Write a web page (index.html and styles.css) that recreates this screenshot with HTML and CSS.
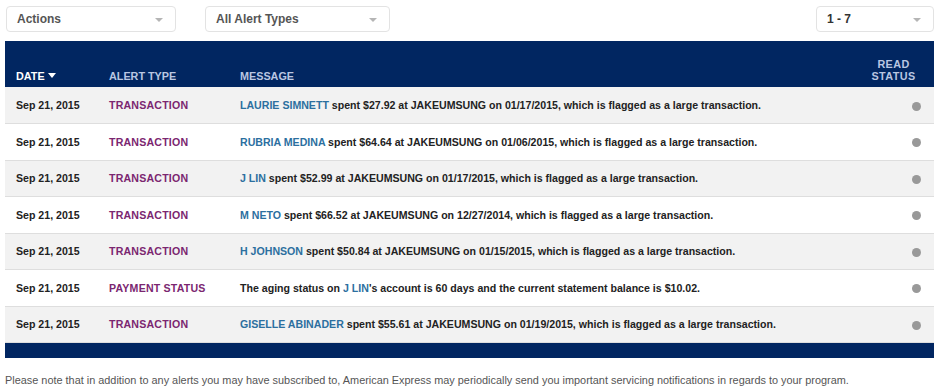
FILE: index.html
```html
<!DOCTYPE html>
<html lang="en">
<head>
  <meta charset="UTF-8">
  <meta name="viewport" content="width=device-width, initial-scale=1.0">
  <title>Alerts</title>
  <link rel="stylesheet" href="styles.css">
</head>
<body>
  <!-- Filters -->
  <div class="toolbar">
    <div class="select select-actions">Actions<span class="caret"></span></div>
    <div class="select select-types">All Alert Types<span class="caret"></span></div>
    <div class="select select-pages">1 - 7<span class="caret"></span></div>
  </div>

  <!-- Alerts Table -->
  <table class="alerts">
    <thead>
      <tr>
        <th class="col-date sorted">DATE<span class="sort-caret"></span></th>
        <th class="col-type">ALERT TYPE</th>
        <th class="col-msg">MESSAGE</th>
        <th class="col-read">READ<br>STATUS</th>
      </tr>
    </thead>
    <tbody>
      <tr>
        <td class="col-date">Sep 21, 2015</td>
        <td class="col-type">TRANSACTION</td>
        <td class="col-msg"><span class="name">LAURIE SIMNETT</span> spent $27.92 at JAKEUMSUNG on 01/17/2015, which is flagged as a large transaction.</td>
        <td class="col-read"><span class="dot"></span></td>
      </tr>
      <tr>
        <td class="col-date">Sep 21, 2015</td>
        <td class="col-type">TRANSACTION</td>
        <td class="col-msg"><span class="name">RUBRIA MEDINA</span> spent $64.64 at JAKEUMSUNG on 01/06/2015, which is flagged as a large transaction.</td>
        <td class="col-read"><span class="dot"></span></td>
      </tr>
      <tr>
        <td class="col-date">Sep 21, 2015</td>
        <td class="col-type">TRANSACTION</td>
        <td class="col-msg"><span class="name">J LIN</span> spent $52.99 at JAKEUMSUNG on 01/17/2015, which is flagged as a large transaction.</td>
        <td class="col-read"><span class="dot"></span></td>
      </tr>
      <tr>
        <td class="col-date">Sep 21, 2015</td>
        <td class="col-type">TRANSACTION</td>
        <td class="col-msg"><span class="name">M NETO</span> spent $66.52 at JAKEUMSUNG on 12/27/2014, which is flagged as a large transaction.</td>
        <td class="col-read"><span class="dot"></span></td>
      </tr>
      <tr>
        <td class="col-date">Sep 21, 2015</td>
        <td class="col-type">TRANSACTION</td>
        <td class="col-msg"><span class="name">H JOHNSON</span> spent $50.84 at JAKEUMSUNG on 01/15/2015, which is flagged as a large transaction.</td>
        <td class="col-read"><span class="dot"></span></td>
      </tr>
      <tr>
        <td class="col-date">Sep 21, 2015</td>
        <td class="col-type">PAYMENT STATUS</td>
        <td class="col-msg">The aging status on <span class="name">J LIN</span>'s account is 60 days and the current statement balance is $10.02.</td>
        <td class="col-read"><span class="dot"></span></td>
      </tr>
      <tr>
        <td class="col-date">Sep 21, 2015</td>
        <td class="col-type">TRANSACTION</td>
        <td class="col-msg"><span class="name">GISELLE ABINADER</span> spent $55.61 at JAKEUMSUNG on 01/19/2015, which is flagged as a large transaction.</td>
        <td class="col-read"><span class="dot"></span></td>
      </tr>
    </tbody>
    <tfoot>
      <tr><td colspan="4"></td></tr>
    </tfoot>
  </table>

  <p class="note">Please note that in addition to any alerts you may have subscribed to, American Express may periodically send you important servicing notifications in regards to your program.</p>
</body>
</html>
```

FILE: styles.css
```css
/* General Reset */
body {
  font-family: "Liberation Sans", Arial, sans-serif;
  margin: 0;
  padding: 0;
  background-color: #ffffff;
  color: #222;
}

/* Filter Toolbar */
.toolbar {
  display: flex;
  padding: 6px 6px 0 6px;
  height: 26px;
}

.select {
  position: relative;
  box-sizing: border-box;
  height: 26px;
  border: 1px solid #e3e3e3;
  border-radius: 4px;
  padding: 0 0 0 10px;
  font-size: 12px;
  font-weight: bold;
  line-height: 24px;
  color: #555;
}

.select-actions {
  width: 170px;
}

.select-types {
  width: 185px;
  margin-left: 29px;
}

.select-pages {
  width: 118px;
  margin-left: auto;
  color: #333;
}

.caret {
  position: absolute;
  right: 12px;
  top: 11px;
  width: 0;
  height: 0;
  border-left: 4px solid transparent;
  border-right: 4px solid transparent;
  border-top: 4px solid #b5b5b5;
}

/* Alerts Table */
.alerts {
  width: 929px;
  margin: 9px 0 0 5px;
  border-collapse: collapse;
  font-size: 10.6px;
  font-weight: bold;
}

.alerts thead tr {
  background-color: #012661;
  height: 46px;
}

.alerts th {
  text-align: left;
  vertical-align: bottom;
  padding: 0 0 5px 0;
  color: #b9c7e2;
  font-size: 10.8px;
  line-height: 12px;
}

.alerts th.sorted {
  color: #ffffff;
}

.sort-caret {
  display: inline-block;
  width: 0;
  height: 0;
  margin-left: 3px;
  vertical-align: 2px;
  border-left: 4px solid transparent;
  border-right: 4px solid transparent;
  border-top: 5px solid #ffffff;
}

.alerts th.col-read {
  text-align: center;
  letter-spacing: 0.4px;
  padding-left: 12px;
}

.col-date {
  width: 93px;
  padding-left: 11px !important;
}

.col-type {
  width: 131px;
}

.col-read {
  width: 80px;
}

.alerts tbody tr {
  height: 36.5px;
  border-bottom: 1px solid #dedede;
}

.alerts tbody tr:nth-child(odd) {
  background-color: #f2f2f2;
}

.alerts td {
  padding: 0;
  vertical-align: middle;
}

.alerts td.col-type {
  color: #7b2670;
  letter-spacing: 0.2px;
}

.name {
  color: #2c6f9f;
}

.alerts td.col-read {
  text-align: right;
  padding-right: 13px;
}

.dot {
  display: inline-block;
  width: 9px;
  height: 9px;
  border-radius: 50%;
  background-color: #999;
  vertical-align: middle;
}

.alerts tfoot tr {
  background-color: #012661;
}

.alerts tfoot td {
  padding: 0;
  height: 15px;
}

/* Footnote */
.note {
  margin: 16px 0 0 5px;
  font-size: 10.9px;
  color: #555;
}
```
